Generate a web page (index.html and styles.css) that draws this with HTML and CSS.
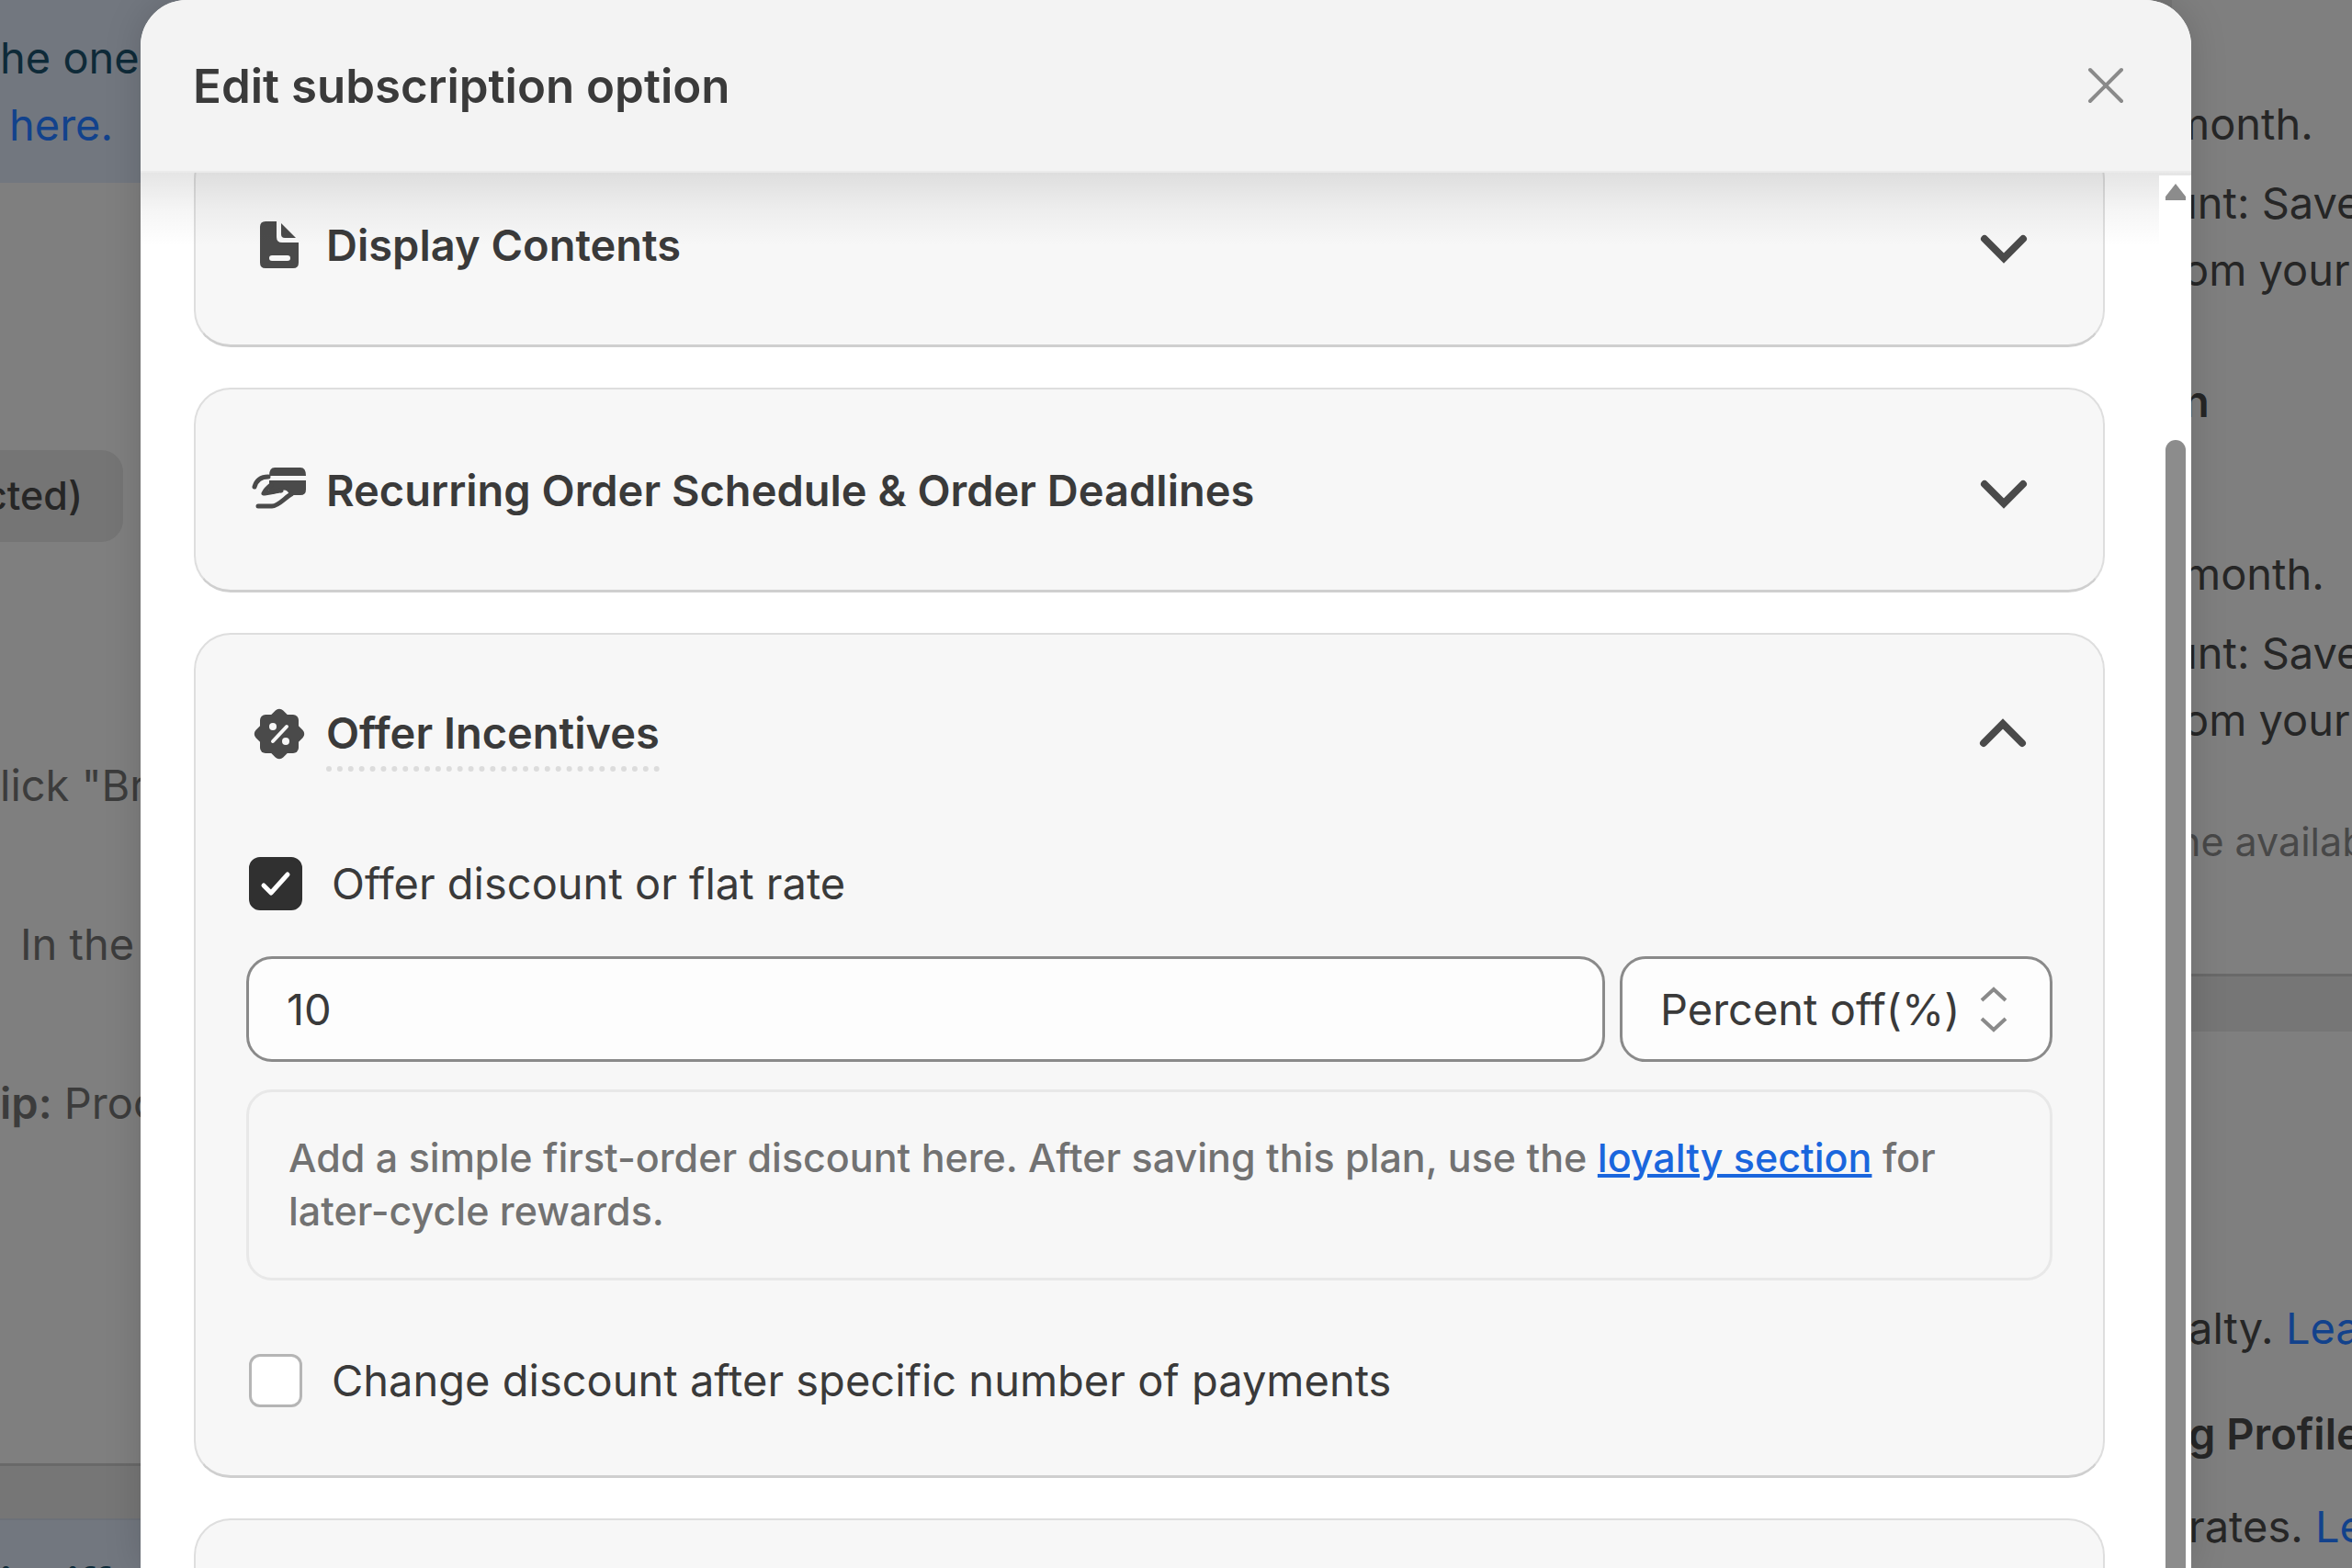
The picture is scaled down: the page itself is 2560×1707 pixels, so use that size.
FILE: index.html
```
<!DOCTYPE html>
<html lang="en">
<head>
    <meta charset="UTF-8">
    <meta name="viewport" content="width=device-width, initial-scale=1.0">
    <title>Edit subscription option</title>
    <link rel="stylesheet" href="styles.css">
</head>
<body>
  <!-- page behind the modal -->
  <div class="page">
    <div class="side left">
      <div class="banner">
        <p>he one</p>
        <p><a href="#" class="link-dark">here.</a></p>
      </div>
      <div class="panel">
        <span class="chip">cted)</span>
        <p class="muted">lick "Br</p>
        <p class="muted in">In the</p>
        <p class="muted"><b>ip:</b> Proc</p>
      </div>
      <div class="banner bottom">
        <p><b>ir diff l</b></p>
      </div>
    </div>

    <div class="side right">
      <div class="panel">
        <ul>
          <li>month.</li>
          <li>unt: Save</li>
          <li class="in">om your</li>
        </ul>
        <h3 class="in">n</h3>
        <ul>
          <li class="in">month.</li>
          <li>unt: Save</li>
          <li class="in">om your</li>
        </ul>
        <p class="small">he availab</p>
      </div>
      <div class="panel second">
        <p class="in">alty. <a href="#" class="link-dark">Lea</a></p>
        <h3 class="in">g Profile</h3>
        <p class="in">rates. <a href="#" class="link-dark">Le</a></p>
      </div>
    </div>
  </div>

  <div class="modal" role="dialog" aria-labelledby="modalTitle">
    <div class="modal-header">
      <h2 id="modalTitle">Edit subscription option</h2>
      <button type="button" class="close" aria-label="Close">
        <svg class="icon" viewBox="0 0 72 72"><path d="M19 19 53 53M53 19 19 53" fill="none" stroke="#8a8a8a" stroke-width="4" stroke-linecap="round"/></svg>
      </button>
    </div>

    <div class="modal-body">
      <div class="cards">
        <section class="card">
          <button type="button" class="card-header">
            <svg class="icon" viewBox="0 0 72 72">
              <path d="M21 11h12v17q0 6 6 6h18v22q0 6-6 6H21q-6 0-6-6V17q0-6 6-6zM28 48q-3 0-3 3t3 3h17q3 0 3-3t-3-3z" fill-rule="evenodd"/>
              <path d="M38 13 54 29H42q-4 0-4-4z"/>
            </svg>
            <span class="card-title">Display Contents</span>
            <svg class="icon arrow" viewBox="0 0 72 72"><path d="M15 30 36 51 57 30"/></svg>
          </button>
        </section>

        <section class="card">
          <button type="button" class="card-header">
            <svg class="icon" viewBox="0 0 72 72">
              <path d="M31 12h28q6 0 6 9H25q0-9 6-9z"/>
              <path d="M25 26h40v10q0 6-6 6H47q-2-7-9-5l-13 3z"/>
              <path d="M9 33C11 26 16 22 24 22M19 40C21 36 23 34 27 31M20 40 38 37M49 41C43 44 35 54 28 54H13" fill="none" stroke="#4a4a4a" stroke-width="5" stroke-linecap="round" stroke-linejoin="round"/>
              <path d="M22 45 37 41" fill="none" stroke="#f7f7f7" stroke-width="3"/>
            </svg>
            <span class="card-title">Recurring Order Schedule &amp; Order Deadlines</span>
            <svg class="icon arrow" viewBox="0 0 72 72"><path d="M15 30 36 51 57 30"/></svg>
          </button>
        </section>

        <section class="card">
          <button type="button" class="card-header">
            <svg class="icon" viewBox="0 0 72 72">
              <rect x="15" y="14" width="42" height="42" rx="6"/>
              <rect x="15" y="14" width="42" height="42" rx="6" transform="rotate(45 36 35)"/>
              <path d="M29 43 44 27" fill="none" stroke="#f7f7f7" stroke-width="4" stroke-linecap="round"/>
              <circle cx="29" cy="27" r="4" fill="#f7f7f7"/>
              <circle cx="43" cy="43" r="4" fill="#f7f7f7"/>
            </svg>
            <span class="card-title dotted">Offer Incentives</span>
            <svg class="icon arrow" viewBox="0 0 72 72"><path d="M14 45 35 24 56 45"/></svg>
          </button>

          <div class="card-content">
            <label class="check">
              <span class="box">
                <input type="checkbox" id="offer" checked>
                <svg class="tick" viewBox="0 0 58 58"><path d="M16 31 24 39 42 19"/></svg>
              </span>
              Offer discount or flat rate
            </label>

            <div class="fields">
              <input type="text" class="amount" value="10" aria-label="Discount">
              <div class="select">
                <select aria-label="Discount type">
                  <option>Percent off(%)</option>
                </select>
                <svg class="icon" viewBox="0 0 72 72"><path d="M23 26 36 14 49 26M23 46 36 58 49 46" fill="none" stroke="#8a8a8a" stroke-width="4"/></svg>
              </div>
            </div>

            <p class="note">Add a simple first-order discount here. After saving this plan, use the <a href="#">loyalty section</a> for later-cycle rewards.</p>

            <label class="check">
              <span class="box">
                <input type="checkbox" id="change">
              </span>
              Change discount after specific number of payments
            </label>
          </div>
        </section>

        <section class="card">
          <button type="button" class="card-header" aria-label="More options"></button>
        </section>
      </div>

      <div class="scrollbar">
        <svg class="up" viewBox="0 0 22 18"><path d="M11 0 22 14V18H0V14z"/></svg>
        <div class="thumb"></div>
      </div>
    </div>
  </div>
</body>
</html>
```
FILE: styles.css
```
*{
    box-sizing: border-box;
}
body{
    margin: 0;
    height: 100vh;
    overflow: hidden;
    background-color: #767676;
    color: #3a3a3a;
    font-family: Inter, sans-serif;
    font-size: 47px;
    line-height: 73px;
}
p, ul, h2, h3{
    margin: 0;
    padding: 0;
    font-size: inherit;
    list-style: none;
}
button, input, select{
    font: inherit;
    color: inherit;
}
.icon{
    width: 72px;
    height: 72px;
    flex: none;
    fill: #4a4a4a;
}

/* page behind */
.page{
    display: flex;
    justify-content: space-between;
    height: 100vh;
    color: #262626;
    white-space: nowrap;
}
.side{
    display: flex;
    flex-direction: column;
    overflow: hidden;
}
.left{
    width: 200px;
}
.right{
    width: 196px;
}
.banner{
    flex: none;
    height: 199px;
    padding-top: 26px;
    background-color: #72777f;
    color: #0e2a38;
}
.banner .link-dark{
    margin-left: 10px;
}
.banner.bottom{
    margin-top: 57px;
    padding-top: 32px;
    border-top: 2px solid #6d7178;
}
.link-dark{
    color: #12428c;
    text-decoration: none;
}
.panel{
    flex: none;
    background-color: #7f7f7f;
    border-bottom: 3px solid #696969;
}
.left .panel{
    height: 1397px;
    padding-top: 291px;
}
.chip{
    display: flex;
    justify-content: flex-end;
    width: 134px;
    height: 100px;
    margin-bottom: 228px;
    padding-right: 44px;
    font-size: 43px;
    line-height: 98px;
    font-weight: 500;
    background-color: #757575;
    border-radius: 0 24px 24px 0;
}
.muted{
    margin-bottom: 100px;
    color: #3c3c3c;
}
.muted.in{
    padding-left: 22px;
}
.muted b{
    font-weight: 600;
}
.right .panel{
    height: 1063px;
    padding-top: 98px;
}
.right li:first-child{
    margin-bottom: 13px;
}
.right h3{
    margin: 70px 0 115px;
    font-weight: 600;
}
.right .in{
    padding-left: 12px;
}
.small{
    margin-top: 60px;
    padding-left: 6px;
    font-size: 43px;
    color: #484848;
}
.right .second{
    height: 640px;
    margin-top: 60px;
    padding-top: 286px;
}
.right .second h3{
    margin: 42px 0 28px;
}
.right .second .in{
    padding-left: 18px;
}

/* modal */
.modal{
    position: absolute;
    inset: 0 175px 0 153px;
    display: flex;
    flex-direction: column;
    background-color: white;
    border-radius: 50px 50px 0 0;
    box-shadow: 0 0 40px rgba(0, 0, 0, 0.15);
    overflow: hidden;
}
.modal-header{
    display: flex;
    align-items: center;
    justify-content: space-between;
    height: 188px;
    padding: 0 57px;
    background-color: #f3f3f3;
    border-bottom: 2px solid #ebebeb;
}
.modal-header h2{
    font-size: 51px;
    font-weight: 600;
}
.close{
    display: flex;
    padding: 0;
    border: none;
    background: none;
    cursor: pointer;
}
.modal-body{
    position: relative;
    flex: 1;
    min-height: 0;
    overflow: hidden;
}
.modal-body::before{
    content: "";
    position: absolute;
    inset: 0 0 auto 0;
    height: 80px;
    background: linear-gradient(rgba(0, 0, 0, 0.1), rgba(0, 0, 0, 0.04) 50%, transparent);
}
/* list is scrolled down a little */
.cards{
    display: flex;
    flex-direction: column;
    gap: 44px;
    margin-top: -33px;
    padding: 0 94px 0 58px;
}
.card{
    background-color: #f7f7f7;
    border: 2px solid #dedede;
    border-bottom: 3px solid #cfcfcf;
    border-radius: 40px;
}
.card-header{
    display: flex;
    align-items: center;
    gap: 15px;
    width: 100%;
    height: 218px;
    padding: 0 72px 0 55px;
    border: none;
    background: none;
    text-align: left;
    cursor: pointer;
}
.card-title{
    font-weight: 600;
}
.card-title.dotted{
    border-bottom: 6px dotted #dcdcdc;
}
.arrow{
    margin-left: auto;
    fill: none;
    stroke: #4a4a4a;
    stroke-width: 8;
    stroke-linecap: round;
}
.card-content{
    padding: 16px 55px 67px;
}
.check{
    display: flex;
    align-items: center;
    gap: 32px;
    padding-left: 3px;
}
.box{
    display: grid;
}
.box input{
    grid-area: 1 / 1;
    appearance: none;
    width: 58px;
    height: 58px;
    margin: 0;
    background-color: white;
    border: 3px solid #b5b5b5;
    border-radius: 12px;
}
.box input:checked{
    background-color: #303030;
    border-color: #303030;
}
.tick{
    grid-area: 1 / 1;
    width: 58px;
    height: 58px;
    fill: none;
    stroke: white;
    stroke-width: 5;
    stroke-linecap: round;
    stroke-linejoin: round;
    pointer-events: none;
}
.fields{
    display: flex;
    gap: 16px;
    margin: 43px 0 30px;
}
.amount, .select select{
    height: 115px;
    background-color: #fdfdfd;
    border: 3px solid #8a8a8a;
    border-radius: 28px;
}
.amount{
    flex: 1;
    min-width: 0;
    padding: 0 41px;
}
.select{
    display: grid;
    align-items: center;
}
.select select{
    grid-area: 1 / 1;
    appearance: none;
    padding: 0 97px 0 41px;
}
.select .icon{
    grid-area: 1 / 1;
    justify-self: end;
    margin-right: 28px;
    pointer-events: none;
}
.note{
    margin-bottom: 72px;
    padding: 42px 43px 44px;
    border: 3px solid #e8e8e8;
    border-radius: 28px;
    font-size: 43px;
    font-weight: 450;
    line-height: 58px;
    color: #727272;
}
.note a{
    color: #1a66dd;
    text-decoration-thickness: 4px;
}
.scrollbar{
    position: absolute;
    inset: 3px 0 0 auto;
    display: flex;
    flex-direction: column;
    align-items: center;
    width: 35px;
    padding-top: 9px;
    background-color: white;
}
.up{
    width: 22px;
    height: 18px;
    margin-bottom: 261px;
    fill: #8c8c8c;
}
.thumb{
    flex: 1;
    width: 22px;
    background-color: #8c8c8c;
    border-radius: 11px 11px 0 0;
}
```
